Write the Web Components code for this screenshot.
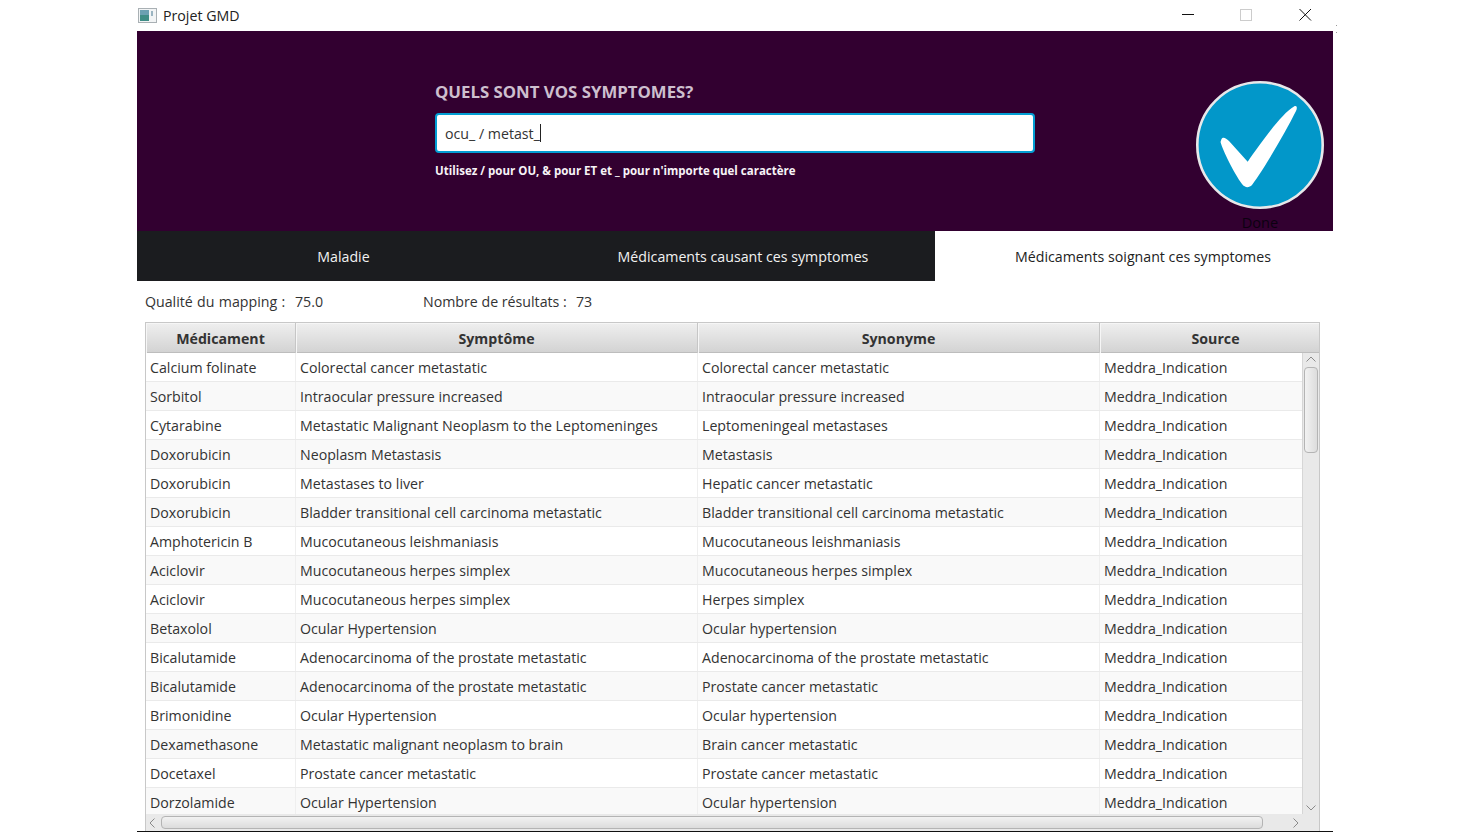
<!DOCTYPE html>
<html lang="fr"><head><meta charset="utf-8"><title>Projet GMD</title>
<style>
html,body{margin:0;height:832px;overflow:hidden;background:#fff}
body{font-family:"Open Sans","Noto Sans",sans-serif;color:#333}
</style></head><body>
<app-window>
  <title-bar>Projet GMD</title-bar>
  <search-header></search-header>
  <tab-bar></tab-bar>
  <stat-row></stat-row>
  <data-table></data-table>
</app-window>
<script>
const FONT='"Open Sans","Noto Sans",sans-serif';
function def(name,html,setup){
  customElements.define(name,class extends HTMLElement{
    connectedCallback(){
      if(this.shadowRoot)return;
      const r=this.attachShadow({mode:'open'});
      r.innerHTML=html;
      if(setup)setup(r,this);
    }
  });
}
def('app-window',`<style>
:host{display:flex;flex-direction:column;width:1196px;height:832px;margin-left:137px;box-sizing:border-box;border-bottom:1px solid #111;position:relative;overflow:visible}
i{position:absolute;left:1199px;width:1px;height:1px;background:#999}
</style><slot></slot><i style="top:25px"></i><i style="top:32px"></i>`);

def('title-bar',`<style>
:host{display:flex;align-items:center;height:31px;flex:none;background:#fff;font:14.2px ${FONT};color:#222;position:relative}
svg.app{margin:0 6px 0 1px;flex:none}
.ctl{position:absolute;top:0;left:0}
</style>
<svg class="app" width="19" height="15" viewBox="0 0 19 15"><rect x=".5" y=".5" width="18" height="14" fill="#f2f4f5" stroke="#a9b0b4"/><rect x="2" y="2" width="9" height="11" fill="#3f8d86"/><rect x="2" y="2" width="9" height="5" fill="#7fa8c4" opacity=".7"/><rect x="13" y="3" width="2" height="5" fill="#9bb5c2"/></svg>
<slot></slot>
<svg class="ctl" width="1196" height="31" viewBox="0 0 1196 31"><path d="M1045 14.5h12" stroke="#111" fill="none"/><rect x="1103.5" y="9.5" width="11" height="11" fill="none" stroke="#ccc"/><path d="M1162.5 9l11.5 11.5M1174 9l-11.5 11.5" stroke="#111" fill="none"/></svg>`);

def('search-header',`<style>
:host{display:flex;height:200px;flex:none;background:#320030;box-sizing:border-box;padding-left:298px;font-family:${FONT}}
.col{width:600px;flex:none;display:flex;flex-direction:column;padding-top:49px}
h1{margin:0;font-size:16.8px;line-height:24px;font-weight:700;color:#cdbfce}
.input{margin-top:9px;height:40px;box-sizing:border-box;background:#fff;border:2px solid #039ed3;border-radius:4px;display:flex;align-items:center;padding-left:8px;font-size:14.2px;color:#333}
.caret{display:inline-block;width:1px;height:18px;background:#222;align-self:center}
p{margin:9px 0 0;font-size:11.5px;line-height:17px;font-weight:700;color:#f7f3f7}
.btn{margin-left:161px;margin-top:50px;display:flex;flex-direction:column;align-items:center;width:128px;flex:none}
svg{display:block;flex:none}
.done{font-size:14.6px;line-height:20px;margin-top:3px;color:#0c0010;flex:none}
</style>
<div class="col"><h1>QUELS SONT VOS SYMPTOMES?</h1>
<div class="input"><span>ocu_ / metast_</span><span class="caret"></span></div>
<p>Utilisez / pour OU, &amp; pour ET et _ pour n'importe quel caractère</p></div>
<div class="btn"><svg width="128" height="128" viewBox="0 0 128 128"><circle cx="64" cy="64" r="62.7" fill="#0297c9" stroke="#e8e8ea" stroke-width="2.6"/><path d="M25.5 58C27 55.5 30 57 33 60L51.7 80.7C65 62 85 33 98 25.5C101 24 101.5 27 100 30C90 50 70 85 56 104C53 107 49 107 46 103C38 92 27 70 24.5 61Z" fill="#fff"/></svg><div class="done">Done</div></div>`);

def('tab-bar',`<style>
:host{display:flex;height:50px;flex:none;font:14.2px ${FONT}}
div{width:399px;display:flex;align-items:center;justify-content:center;box-sizing:border-box;background:#1b1c1f;color:#f2f2f2}
.on{background:#fff;color:#222;width:398px;padding-left:18px}
</style>
<div style="padding-left:14px">Maladie</div><div style="padding-left:15px">Médicaments causant ces symptomes</div><div class="on">Médicaments soignant ces symptomes</div>`);

def('stat-row',`<style>
:host{display:flex;height:41px;flex:none;align-items:center;padding-left:8px;font:14.2px ${FONT};color:#333}
.a{width:150px;word-spacing:.6px}.b{width:128px}.c{width:153px}
</style><span class="a">Qualité du mapping :</span><span class="b">75.0</span><span class="c">Nombre de résultats :</span><span>73</span>`);

const rows=`Calcium folinate|Colorectal cancer metastatic|Colorectal cancer metastatic
Sorbitol|Intraocular pressure increased|Intraocular pressure increased
Cytarabine|Metastatic Malignant Neoplasm to the Leptomeninges|Leptomeningeal metastases
Doxorubicin|Neoplasm Metastasis|Metastasis
Doxorubicin|Metastases to liver|Hepatic cancer metastatic
Doxorubicin|Bladder transitional cell carcinoma metastatic|Bladder transitional cell carcinoma metastatic
Amphotericin B|Mucocutaneous leishmaniasis|Mucocutaneous leishmaniasis
Aciclovir|Mucocutaneous herpes simplex|Mucocutaneous herpes simplex
Aciclovir|Mucocutaneous herpes simplex|Herpes simplex
Betaxolol|Ocular Hypertension|Ocular hypertension
Bicalutamide|Adenocarcinoma of the prostate metastatic|Adenocarcinoma of the prostate metastatic
Bicalutamide|Adenocarcinoma of the prostate metastatic|Prostate cancer metastatic
Brimonidine|Ocular Hypertension|Ocular hypertension
Dexamethasone|Metastatic malignant neoplasm to brain|Brain cancer metastatic
Docetaxel|Prostate cancer metastatic|Prostate cancer metastatic
Dorzolamide|Ocular Hypertension|Ocular hypertension`.split('\n').map(l=>l.split('|'));

def('data-table',`<style>
:host{display:block;margin-left:8px;width:1175px;height:509px;flex:none;box-sizing:border-box;border:1px solid #c8c8c8;border-bottom:0;font:14.2px ${FONT};color:#333;position:relative;overflow:hidden;background:#e8e8e8}
.head,.row{display:grid;grid-template-columns:150px 402px 402px 1fr}
.head{height:30px;box-sizing:border-box;border-bottom:1px solid #bdbdbd;background:linear-gradient(#efefef,#d3d3d3);font-weight:700;text-align:center;line-height:31px}
.head span{border-right:1px solid #c6c6c6;box-shadow:inset 1px 1px 0 #f6f6f6}
.head span:last-child{border-right:0;padding-left:12px}
.main{display:grid;grid-template-columns:1fr 17px;grid-template-rows:461px 17px}
.body{overflow:hidden;background:#fff}
.row{height:29px;box-sizing:border-box;border-bottom:1px solid #eaeaea;line-height:30px;background:#fff}
.row:nth-child(even){background:#f9f9f9}
.row span{padding-left:4px;border-right:1px solid #efefef;white-space:nowrap;overflow:hidden}
.row span:last-child{border-right:0}
.v{position:relative;background:#e9e9e9;border-left:1px solid #d6d6d6}
.h{position:relative;background:#e9e9e9}
.corner{background:#e9e9e9}
.tv,.th{position:absolute;box-sizing:border-box;border:1px solid #b4b4b4;border-radius:4px;background:linear-gradient(90deg,#f2f2f2,#dcdcdc)}
.tv{left:1px;top:14px;width:14px;height:86px}
.th{left:15px;top:2px;width:1102px;height:13px;background:linear-gradient(#f2f2f2,#dcdcdc)}
svg{position:absolute}
</style>
<div class="head"><span>Médicament</span><span>Symptôme</span><span>Synonyme</span><span>Source</span></div>
<div class="main">
<div class="body"></div>
<div class="v"><svg style="left:3px;top:3px" width="10" height="6" viewBox="0 0 10 6"><path d="M.5 5.5L5 1l4.5 4.5" fill="none" stroke="#8a8a8a"/></svg><div class="tv"></div><svg style="left:3px;bottom:3px" width="10" height="6" viewBox="0 0 10 6"><path d="M.5.5L5 5l4.5-4.5" fill="none" stroke="#8a8a8a"/></svg></div>
<div class="h"><svg style="left:3px;top:4px" width="6" height="10" viewBox="0 0 6 10"><path d="M5.5.5L1 5l4.5 4.5" fill="none" stroke="#8a8a8a"/></svg><div class="th"></div><svg style="right:3px;top:4px" width="6" height="10" viewBox="0 0 6 10"><path d="M.5.5L5 5 .5 9.5" fill="none" stroke="#8a8a8a"/></svg></div>
<div class="corner"></div>
</div>`,(r)=>{
  r.querySelector('.body').innerHTML=rows.map(c=>`<div class="row"><span>${c[0]}</span><span>${c[1]}</span><span>${c[2]}</span><span>Meddra_Indication</span></div>`).join('');
});
</script></body></html>
